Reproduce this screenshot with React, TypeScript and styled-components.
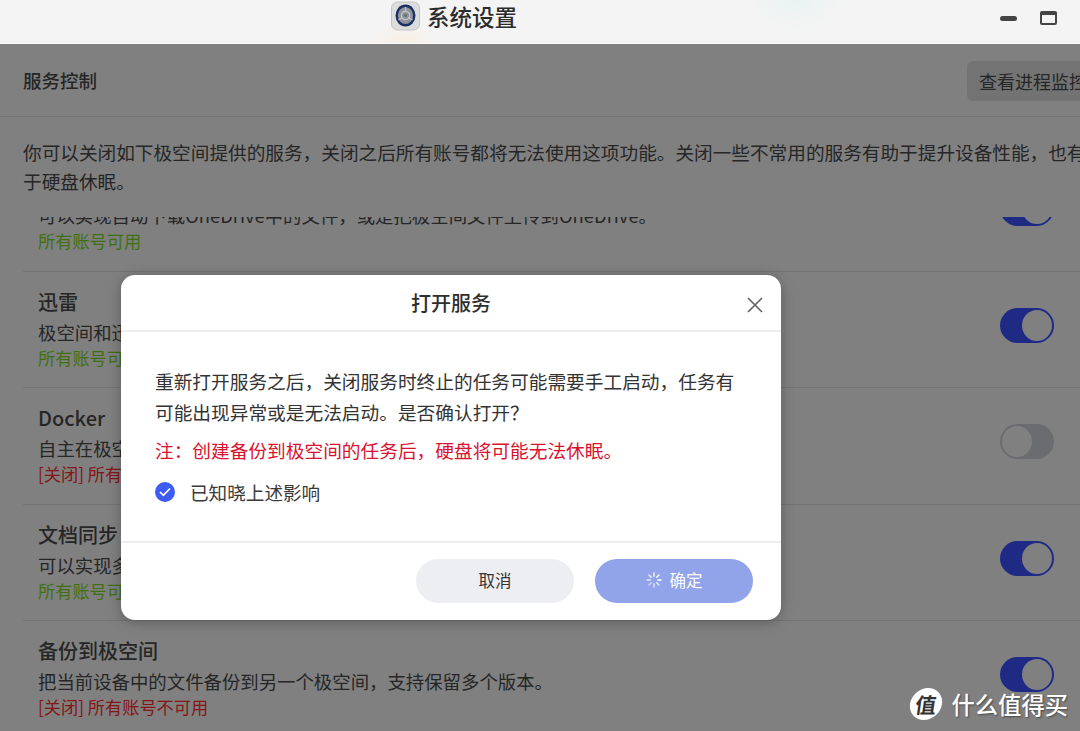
import React from 'react';
import styled, { createGlobalStyle } from 'styled-components';

const font = {
  primary: '"Noto Sans CJK SC", "Noto Sans", sans-serif',
};

const color = {
  mask: '#808080',
  line: '#737373',
  ink: '#262626',
  green: '#3f7010',
  red: '#851616',
  on: '#1f2a85',
  off: '#6b6c70',
  blue: '#3d5bf5',
};

const GlobalStyle = createGlobalStyle`
  html, body {
    margin: 0;
    padding: 0;
    background: ${color.mask};
    font-family: ${font.primary};
  }
`;

const Page = styled.div`
  position: relative;
  width: 1080px;
  height: 731px;
  overflow: hidden;
  background: ${color.mask};
`;

const TitleBar = styled.header`
  height: 43px;
  box-sizing: content-box;
  display: flex;
  justify-content: space-between;
  padding-left: 391px;
  background:
    radial-gradient(ellipse 46px 30px at 795px 0, #e8f4f2 0%, transparent 100%),
    radial-gradient(ellipse 36px 22px at 402px 44px, #f9efe4 0%, transparent 100%),
    #f4f4f4;
  border-bottom: 1px solid #fafafa;
`;

const AppName = styled.div`
  display: flex;
  align-items: flex-start;
  gap: 7px;
  padding-top: 1px;
  font: 500 22.5px/30px ${font.primary};
  color: #2c2c2c;
`;

const WindowButtons = styled.div`
  display: flex;
  align-items: center;
  gap: 23px;
  height: 36px;
  padding-right: 23px;
`;

const Minimize = styled.span`
  width: 17px;
  height: 5px;
  border-radius: 3px;
  background: #444;
`;

const Maximize = styled.span`
  box-sizing: border-box;
  width: 17px;
  height: 14px;
  border: 2.5px solid #444;
  border-top-width: 4px;
  border-radius: 2px;
`;

const SectionHead = styled.div`
  height: 72px;
  display: flex;
  align-items: center;
  justify-content: space-between;
  padding-left: 23px;
  border-bottom: 1px solid ${color.line};
  overflow: hidden;
`;

const SectionTitle = styled.h2`
  margin: 0;
  font: 500 18.5px/26px ${font.primary};
  color: ${color.ink};
`;

const MonitorButton = styled.button`
  flex: none;
  width: 130px;
  height: 40px;
  margin-top: 2px;
  margin-right: -17px;
  padding: 0 0 0 12px;
  border: 0;
  border-radius: 6px 0 0 6px;
  background: #737373;
  color: ${color.ink};
  font: 400 18px/40px ${font.primary};
  text-align: left;
  white-space: nowrap;
  overflow: hidden;
`;

const Intro = styled.p`
  margin: 0;
  height: 100px;
  box-sizing: border-box;
  padding: 20px 0 0 23px;
  width: 1120px;
  font: 400 18.65px/29px ${font.primary};
  color: ${color.ink};
`;

const ListClip = styled.div`
  height: 514px;
  overflow: hidden;
`;

const List = styled.ul`
  list-style: none;
  margin: -62px 0 0;
  padding: 0;
`;

const Row = styled.li`
  box-sizing: border-box;
  height: 116.5px;
  margin-left: 23px;
  padding: 16px 26px 0 15px;
  display: flex;
  justify-content: space-between;
  align-items: flex-start;
  border-bottom: 1px solid ${color.line};
`;

const RowTitle = styled.div`
  font: 500 20px/28px ${font.primary};
  color: ${color.ink};
`;

const RowDesc = styled.div`
  margin-top: 3px;
  font: 400 18.4px/26px ${font.primary};
  color: ${color.ink};
`;

const RowStatus = styled.div<{ $enabled: boolean }>`
  font: 400 17.2px/26px ${font.primary};
  color: ${({ $enabled }) => ($enabled ? color.green : color.red)};
`;

const Toggle = styled.span<{ $on: boolean }>`
  flex: none;
  box-sizing: border-box;
  display: flex;
  justify-content: ${({ $on }) => ($on ? 'flex-end' : 'flex-start')};
  width: 54px;
  height: 35px;
  margin-top: 20px;
  padding: 2px;
  border-radius: 18px;
  background: ${({ $on }) => ($on ? color.on : color.off)};

  &::after {
    content: '';
    width: 30px;
    height: 31px;
    border-radius: 50%;
    background: ${color.mask};
  }
`;

const Dialog = styled.section`
  position: absolute;
  left: 121px;
  top: 275px;
  width: 660px;
  height: 345px;
  border-radius: 14px;
  background: #fff;
  box-shadow: 0 2px 14px rgba(0, 0, 0, 0.28);
  display: flex;
  flex-direction: column;
`;

const DialogHead = styled.div`
  height: 55px;
  flex: none;
  display: flex;
  align-items: center;
  justify-content: center;
  position: relative;
  border-bottom: 2px solid #eeeeee;
`;

const DialogTitle = styled.h3`
  margin: 0;
  font: 500 20px/28px ${font.primary};
  color: #2e2e2e;
`;

const CloseButton = styled.button`
  position: absolute;
  right: 17px;
  top: 21px;
  width: 18px;
  height: 18px;
  padding: 0;
  border: 0;
  background: none;
  display: flex;
`;

const DialogBody = styled.div`
  flex: 1;
  padding: 33px 46px 0 34px;
`;

const Message = styled.p`
  margin: 0;
  font: 400 18.7px/31px ${font.primary};
  color: #333;
`;

const Warning = styled.p`
  margin: 7px 0 0;
  font: 400 18.7px/31px ${font.primary};
  color: #d9122f;
`;

const Acknowledge = styled.label`
  margin-top: 11px;
  display: flex;
  align-items: center;
  gap: 15px;
  font: 400 18.6px/31px ${font.primary};
  color: #3a3a3a;
`;

const Check = styled.span`
  width: 20px;
  height: 20px;
  border-radius: 50%;
  background: ${color.blue};
  display: flex;
  align-items: center;
  justify-content: center;
`;

const DialogFoot = styled.div`
  height: 79px;
  flex: none;
  box-sizing: border-box;
  padding: 16px 28px 0 0;
  display: flex;
  justify-content: flex-end;
  gap: 21px;
  border-top: 2px solid #eeeeee;
`;

const PillButton = styled.button<{ $primary?: boolean }>`
  width: 158px;
  height: 44px;
  padding: 0 0 3px;
  border: 0;
  border-radius: 22px;
  display: flex;
  align-items: center;
  justify-content: center;
  gap: 8px;
  font: 400 16.5px/40px ${font.primary};
  background: ${({ $primary }) => ($primary ? '#91a4e9' : '#edeef2')};
  color: ${({ $primary }) => ($primary ? '#fff' : '#333')};
`;

const Watermark = styled.div`
  position: absolute;
  right: 12px;
  top: 688px;
  display: flex;
  align-items: center;
  gap: 10px;
  color: #fff;
  font: 500 23.3px/32px ${font.primary};
  text-shadow: 1px 1px 2px rgba(0, 0, 0, 0.45);
`;

const WatermarkBadge = styled.span`
  width: 32px;
  height: 32px;
  border-radius: 50%;
  background: #fff;
  color: #333;
  display: flex;
  align-items: center;
  justify-content: center;
  font: 700 21px/32px ${font.primary};
  text-shadow: none;
  transform: skewX(-8deg);
`;

const AppIcon = () => (
  <svg width="29" height="30" viewBox="0 0 29 30">
    <rect x="0.5" y="1" width="28" height="28" rx="6" fill="#dcdcdc" stroke="#c4c4c4" />
    <ellipse cx="14.5" cy="14.5" rx="10" ry="11" fill="#1c2f66" />
    <ellipse cx="14.5" cy="14.5" rx="7.6" ry="8.6" fill="#8d9299" />
    <circle cx="14.5" cy="14.5" r="4.2" fill="none" stroke="#c3c6ca" strokeWidth="1.2" />
    <path d="M14.5 6v5M7.5 19l4-2.5M21.5 19l-4-2.5" stroke="#c3c6ca" strokeWidth="1.2" />
    <circle cx="14.5" cy="14.5" r="1.4" fill="#666b73" />
  </svg>
);

const Spinner = () => (
  <svg width="16" height="16" viewBox="0 0 16 16" stroke="#fff" strokeWidth="1.3" strokeLinecap="round">
    <path d="M8 1v3.2" />
    <path d="M8 11.8V15" opacity="0.75" />
    <path d="M1 8h3.2" opacity="0.75" />
    <path d="M11.8 8H15" />
    <path d="M3 3l2.3 2.3" opacity="0.9" />
    <path d="M10.7 10.7 13 13" opacity="0.8" />
    <path d="M13 3l-2.3 2.3" />
    <path d="M5.3 10.7 3 13" opacity="0.6" />
  </svg>
);

interface Service {
  title: string;
  desc: string;
  status: string;
  enabled: boolean;
  on: boolean;
}

const services: Service[] = [
  {
    title: 'OneDrive',
    desc: '可以实现自动下载OneDrive中的文件，或是把极空间文件上传到OneDrive。',
    status: '所有账号可用',
    enabled: true,
    on: true,
  },
  {
    title: '迅雷',
    desc: '极空间和迅雷账号绑定后，可以使用迅雷下载文件。',
    status: '所有账号可用',
    enabled: true,
    on: true,
  },
  {
    title: 'Docker',
    desc: '自主在极空间上安装和运行容器应用。',
    status: '[关闭] 所有账号不可用',
    enabled: false,
    on: false,
  },
  {
    title: '文档同步',
    desc: '可以实现多台设备之间的文档同步。',
    status: '所有账号可用',
    enabled: true,
    on: true,
  },
  {
    title: '备份到极空间',
    desc: '把当前设备中的文件备份到另一个极空间，支持保留多个版本。',
    status: '[关闭] 所有账号不可用',
    enabled: false,
    on: true,
  },
];

const App: React.FC = () => (
  <Page>
    <GlobalStyle />
    <TitleBar>
      <AppName>
        <AppIcon />
        系统设置
      </AppName>
      <WindowButtons>
        <Minimize />
        <Maximize />
      </WindowButtons>
    </TitleBar>

    <SectionHead>
      <SectionTitle>服务控制</SectionTitle>
      <MonitorButton>查看进程监控</MonitorButton>
    </SectionHead>
    <Intro>
      你可以关闭如下极空间提供的服务，关闭之后所有账号都将无法使用这项功能。关闭一些不常用的服务有助于提升设备性能，也有助于硬盘休眠。
    </Intro>

    <ListClip>
      <List>
        {services.map((s) => (
          <Row key={s.title}>
            <div>
              <RowTitle>{s.title}</RowTitle>
              <RowDesc>{s.desc}</RowDesc>
              <RowStatus $enabled={s.enabled}>{s.status}</RowStatus>
            </div>
            <Toggle $on={s.on} />
          </Row>
        ))}
      </List>
    </ListClip>

    <Dialog>
      <DialogHead>
        <DialogTitle>打开服务</DialogTitle>
        <CloseButton aria-label="关闭">
          <svg width="18" height="18" viewBox="0 0 18 18" stroke="#666" strokeWidth="1.7">
            <path d="M2 2l14 14M16 2 2 16" />
          </svg>
        </CloseButton>
      </DialogHead>
      <DialogBody>
        <Message>
          重新打开服务之后，关闭服务时终止的任务可能需要手工启动，任务有可能出现异常或是无法启动。是否确认打开？
        </Message>
        <Warning>注：创建备份到极空间的任务后，硬盘将可能无法休眠。</Warning>
        <Acknowledge>
          <Check>
            <svg width="12" height="10" viewBox="0 0 12 10" fill="none" stroke="#fff" strokeWidth="1.7">
              <path d="M1 5l3.4 3.4L11 1.5" />
            </svg>
          </Check>
          已知晓上述影响
        </Acknowledge>
      </DialogBody>
      <DialogFoot>
        <PillButton>取消</PillButton>
        <PillButton $primary>
          <Spinner />
          确定
        </PillButton>
      </DialogFoot>
    </Dialog>

    <Watermark>
      <WatermarkBadge>值</WatermarkBadge>
      什么值得买
    </Watermark>
  </Page>
);

export default App;
